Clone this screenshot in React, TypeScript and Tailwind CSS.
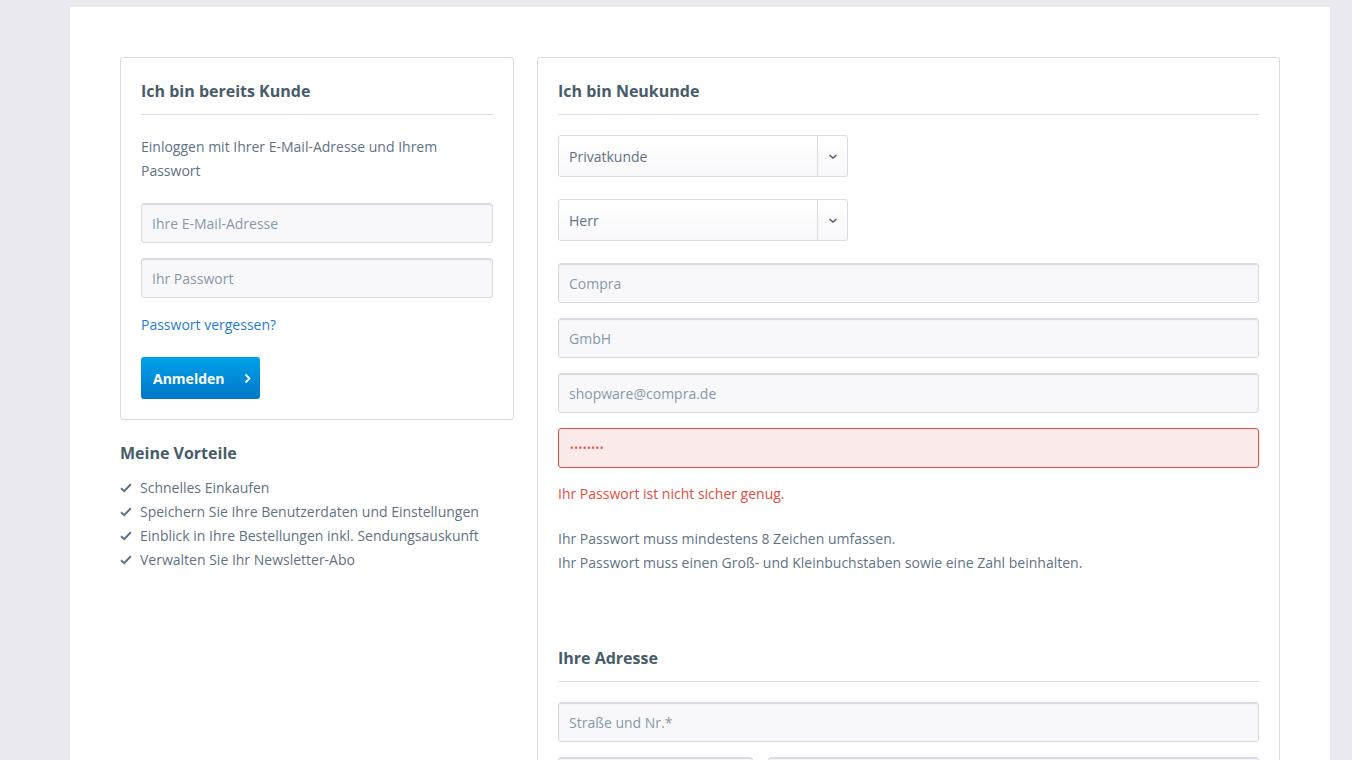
import React from "react";

const Field = ({ text }: { text: string }) => (
  <div className="flex h-[40px] items-center rounded-[3px] border border-[#dadae5] bg-[#f8f8fa] px-[10px] text-[14px] text-[#8798a9] shadow-[inset_0_1px_1px_#dadae5]">
    {text}
  </div>
);

const Select = ({ value }: { value: string }) => (
  <div className="flex h-[42px] w-[290px] items-stretch rounded-[3px] border border-[#dadae5] bg-gradient-to-b from-white to-[#f8f8fa] text-[14px] text-[#5f7285]">
    <div className="flex flex-1 items-center px-[10px]">{value}</div>
    <div className="flex w-[30px] items-center justify-center border-l border-[#dadae5]">
      <svg width="10" height="7" viewBox="0 0 10 7" fill="none">
        <path d="M1.5 2 5 5 8.5 2" stroke="#475c6a" strokeWidth="1.5" />
      </svg>
    </div>
  </div>
);

const PanelHeading = ({ children }: { children: React.ReactNode }) => (
  <h2 className="border-b border-[#dadae5] pb-[10px] text-[16px] font-bold leading-[26px] text-[#475c6a]">
    {children}
  </h2>
);

const Check = () => (
  <svg width="12" height="10" viewBox="0 0 12 10" fill="none" className="mr-[8px] shrink-0">
    <path d="M1 5.2 4.2 8.2 10.8 1.2" stroke="#5f7285" strokeWidth="2" />
  </svg>
);

const benefits = [
  "Schnelles Einkaufen",
  "Speichern Sie Ihre Benutzerdaten und Einstellungen",
  "Einblick in Ihre Bestellungen inkl. Sendungsauskunft",
  "Verwalten Sie Ihr Newsletter-Abo",
];

export default function App() {
  return (
    <div
      className="min-h-[760px] bg-[#e9e9ef] pt-[7px] text-[#5f7285]"
      style={{ fontFamily: '"Open Sans", "Liberation Sans", sans-serif' }}
    >
      <div className="ml-[70px] flex min-h-[753px] w-[1260px] gap-[23px] bg-white px-[50px] pt-[50px]">
        {/* Login column */}
        <div className="w-[394px] shrink-0">
          <section className="rounded-[3px] border border-[#dadae5] px-[20px] pb-[20px] pt-[20px]">
            <PanelHeading>Ich bin bereits Kunde</PanelHeading>
            <p className="mt-[20px] text-[14px] leading-[24px]">
              Einloggen mit Ihrer E-Mail-Adresse und Ihrem Passwort
            </p>
            <div className="mt-[20px] flex flex-col gap-[15px]">
              <Field text="Ihre E-Mail-Adresse" />
              <Field text="Ihr Passwort" />
            </div>
            <a className="mt-[15px] block text-[14px] leading-[24px] text-[#1f7cd1]">Passwort vergessen?</a>
            <button className="mt-[20px] flex h-[42px] w-[119px] items-center rounded-[3px] bg-gradient-to-b from-[#00a1ea] to-[#0077c7] pl-[12px] text-[14px] font-bold text-white">
              Anmelden
              <svg width="7" height="11" viewBox="0 0 7 11" fill="none" className="ml-[20px]">
                <path d="M1.5 1.5 5.5 5.5 1.5 9.5" stroke="white" strokeWidth="1.8" />
              </svg>
            </button>
          </section>

          <h3 className="mt-[20px] text-[16px] font-bold leading-[26px] text-[#475c6a]">Meine Vorteile</h3>
          <ul className="mt-[10px] text-[14px] leading-[24px]">
            {benefits.map((b) => (
              <li key={b} className="flex items-center">
                <Check />
                {b}
              </li>
            ))}
          </ul>
        </div>

        {/* Registration column */}
        <section className="flex-1 rounded-t-[3px] border border-b-0 border-[#dadae5] px-[20px] pt-[20px]">
          <PanelHeading>Ich bin Neukunde</PanelHeading>
          <div className="mt-[20px] flex flex-col gap-[22px]">
            <Select value="Privatkunde" />
            <Select value="Herr" />
          </div>
          <div className="mt-[22px] flex flex-col gap-[15px]">
            <Field text="Compra" />
            <Field text="GmbH" />
            <Field text="shopware@compra.de" />
            <div className="flex h-[40px] items-center rounded-[3px] border border-[#e74c3c] bg-[#fbeaea] px-[11px] text-[10px] tracking-[0.5px] text-[#e74c3c]">
              ••••••••
            </div>
          </div>
          <p className="mt-[14px] text-[14px] leading-[24px] text-[#e74c3c]">Ihr Passwort ist nicht sicher genug.</p>
          <p className="mt-[21px] text-[14px] leading-[24px]">
            Ihr Passwort muss mindestens 8 Zeichen umfassen.
            <br />
            Ihr Passwort muss einen Groß- und Kleinbuchstaben sowie eine Zahl beinhalten.
          </p>

          <div className="mt-[70px]">
            <PanelHeading>Ihre Adresse</PanelHeading>
          </div>
          <div className="mt-[20px] flex flex-col gap-[15px]">
            <Field text="Straße und Nr.*" />
            <div className="flex gap-[15px]">
              <div className="w-[195px]">
                <Field text="" />
              </div>
              <div className="flex-1">
                <Field text="" />
              </div>
            </div>
          </div>
        </section>
      </div>
    </div>
  );
}
